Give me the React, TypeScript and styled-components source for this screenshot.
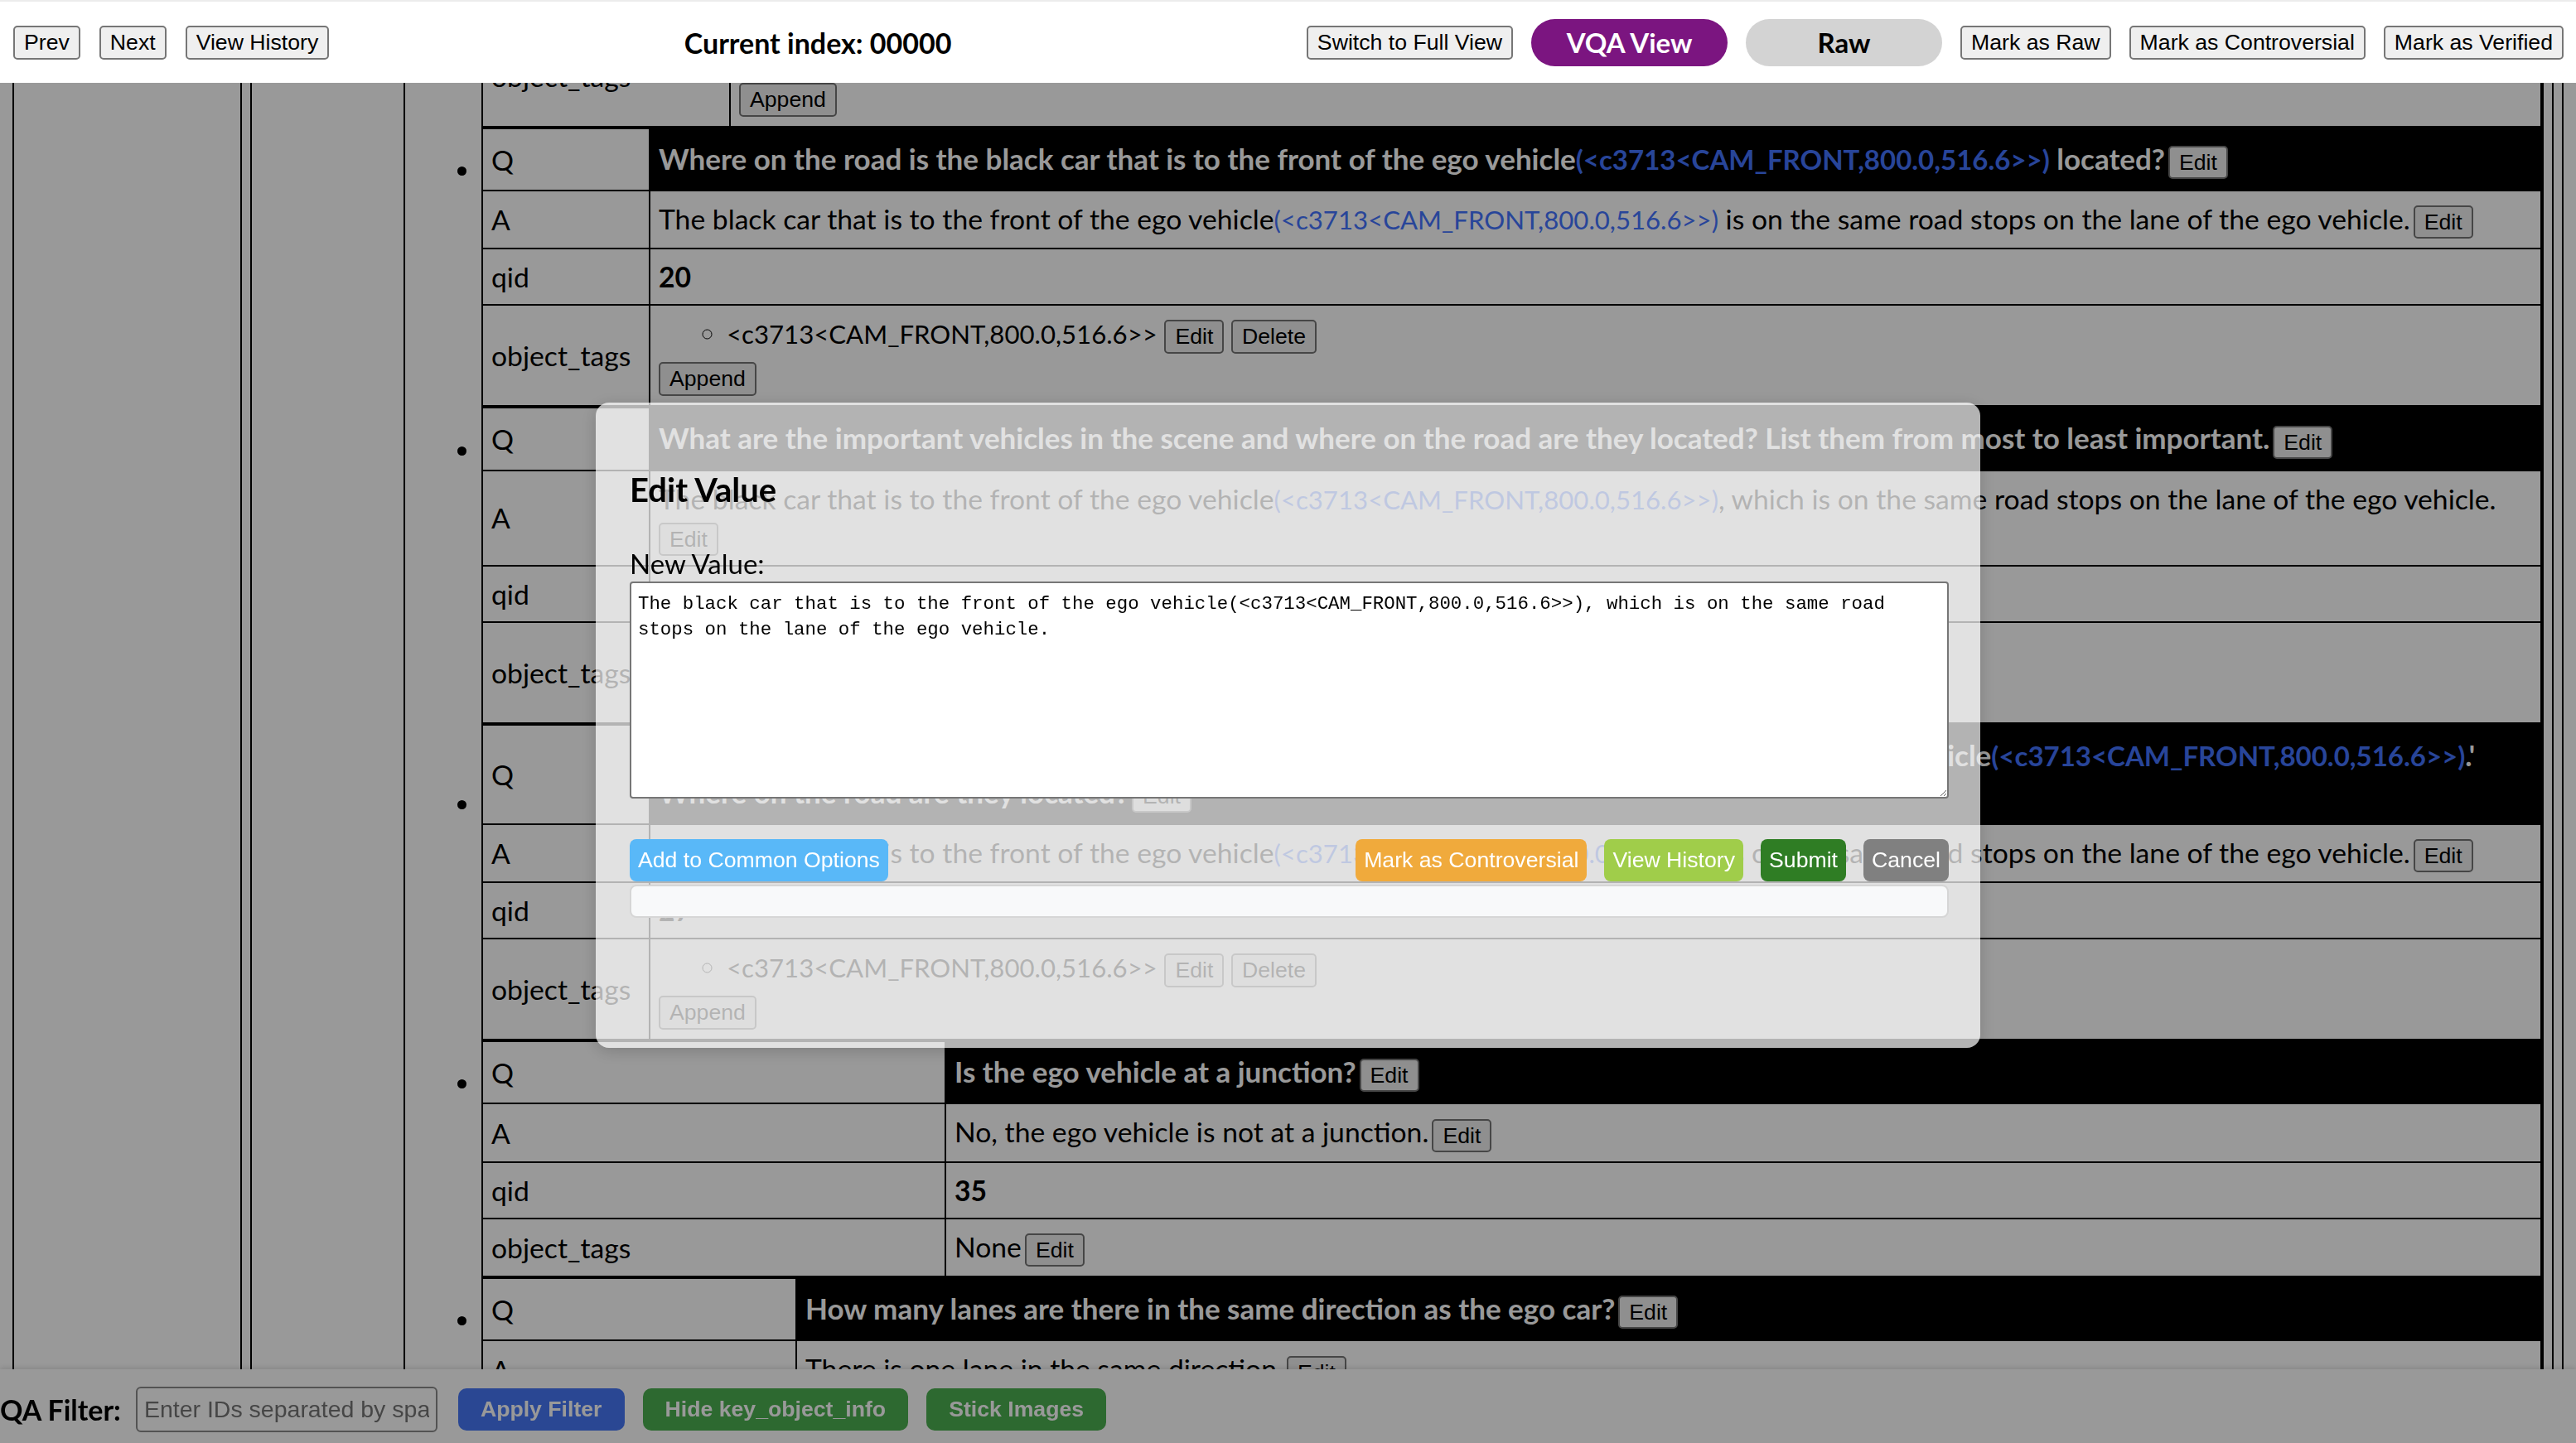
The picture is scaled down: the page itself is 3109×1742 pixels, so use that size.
import styled, { createGlobalStyle } from "styled-components"
import { Fragment } from "react"

const GlobalStyle = createGlobalStyle`
  *, *::before, *::after { box-sizing: border-box; }
  html, body { margin: 0; padding: 0; background: #fff; overflow: hidden; }
  body {
    font-family: Lato, "Noto Sans", sans-serif;
    font-size: 33.7px;
    color: #000;
  }
`

const TAG = "(<c3713<CAM_FRONT,800.0,516.6>>)"
const TAG_TEXT = "<c3713<CAM_FRONT,800.0,516.6>>"

type Entry = {
  label: number
  bare?: boolean
  q?: string[]
  a?: string
  aBreak?: boolean
  qid?: string
  tags: string[] | null
}

const entries: Entry[] = [
  { label: 299, bare: true, tags: [TAG_TEXT] },
  {
    label: 202,
    q: [`Where on the road is the black car that is to the front of the ego vehicle${TAG} located?`],
    a: `The black car that is to the front of the ego vehicle${TAG} is on the same road stops on the lane of the ego vehicle.`,
    qid: "20",
    tags: [TAG_TEXT],
  },
  {
    label: 202,
    q: ["What are the important vehicles in the scene and where on the road are they located? List them from most to least important."],
    a: `The black car that is to the front of the ego vehicle${TAG}, which is on the same road stops on the lane of the ego vehicle.`,
    aBreak: true,
    qid: "24",
    tags: [TAG_TEXT],
  },
  {
    label: 202,
    q: [
      `What are the important objects in the scene? Identify the black car that is to the front of the ego vehicle${TAG}.'`,
      "Where on the road are they located?",
    ],
    a: `The black car that is to the front of the ego vehicle${TAG} is on the same road stops on the lane of the ego vehicle.`,
    qid: "27",
    tags: [TAG_TEXT],
  },
  {
    label: 559,
    q: ["Is the ego vehicle at a junction?"],
    a: "No, the ego vehicle is not at a junction.",
    qid: "35",
    tags: null,
  },
  {
    label: 379,
    q: ["How many lanes are there in the same direction as the ego car?"],
    a: "There is one lane in the same direction.",
    qid: "36",
    tags: null,
  },
]

/* ---------- top bar ---------- */

const TopBar = styled.header`
  position: fixed;
  top: 0;
  left: 0;
  right: 0;
  z-index: 30;
  height: 100px;
  display: flex;
  align-items: center;
  justify-content: space-between;
  padding: 0 15px 0 16px;
  background: #fff;
  border-top: 2px solid #ececec;
`

const ButtonGroup = styled.div<{ $gap: number }>`
  display: flex;
  align-items: center;
  gap: ${p => p.$gap}px;
`

const PlainButton = styled.button`
  font-family: "Liberation Sans", Arial, sans-serif;
  font-size: 26.67px;
  line-height: 31px;
  padding: 3px 11px;
  color: #000;
  background: #efefef;
  border: 2px solid #767676;
  border-radius: 5px;
  cursor: pointer;
`

const IndexLabel = styled.div`
  font-weight: 700;
  font-size: 34px;
`

const ViewPill = styled.button<{ $active?: boolean }>`
  width: 237px;
  height: 57px;
  border: none;
  border-radius: 29px;
  font-family: Lato, sans-serif;
  font-weight: 700;
  font-size: 33px;
  background: ${p => (p.$active ? "#7b1580" : "#d3d3d3")};
  color: ${p => (p.$active ? "#fff" : "#000")};
`

/* ---------- page frame ---------- */

const Frame = styled.div`
  margin-left: 15px;
  width: 3079px;
  min-height: 1742px;
  display: flex;
  border-left: 2px solid #000;
  border-right: 2px solid #000;
`

const SideCell = styled.div`
  flex: none;
  width: 275px;
  border-right: 2px solid #000;
`

const InnerFrame = styled.div`
  flex: 1;
  display: flex;
  margin: 0 10px;
  border-left: 2px solid #000;
  border-right: 2px solid #000;
`

const MidCell = styled.div`
  flex: none;
  width: 185px;
  border-right: 2px solid #000;
`

const ListCell = styled.div`
  flex: 1;
  min-width: 0;
  margin-right: 10px;
  border-right: 2px solid #000;
`

const QaList = styled.ul`
  margin: 30px 0 0;
  padding: 0 0 0 92px;
  list-style: disc;
`

const QaItem = styled.li<{ $bare?: boolean }>`
  list-style: ${p => (p.$bare ? "none" : "disc")};
`

const QaTable = styled.table`
  width: 100%;
  border-collapse: collapse;
`

const TagText = styled.span<{ $plain?: boolean }>`
  font-size: 0.925em;
  color: ${p => (p.$plain ? "inherit" : "#4474ff")};
`

const Cell = styled.td`
  border: 2px solid #000;
  padding: 11px 10px;
  line-height: 44px;
  vertical-align: middle;
`

const LabelCell = styled(Cell)<{ $w: number }>`
  width: ${p => p.$w}px;
`

const QuestionCell = styled(Cell)`
  padding-top: 13px;
  padding-bottom: 13px;
  background: #000;
  color: #fff;
  font-weight: 700;
  font-size: 35px;
  ${TagText} { font-size: 0.943em; }
`

const InlineButton = styled(PlainButton)<{ $flush?: boolean }>`
  margin-left: ${p => (p.$flush ? 0 : 4)}px;
  vertical-align: middle;
  line-height: 30px;
  font-weight: 400;
`

const TagList = styled.ul`
  margin: 0 0 10px;
  padding-left: 82px;
  list-style: circle;
`

const AppendButton = styled(PlainButton)`
  display: block;
`

/* ---------- bottom filter bar ---------- */

const FilterBar = styled.footer`
  position: fixed;
  left: 0;
  right: 0;
  bottom: 0;
  z-index: 10;
  height: 89px;
  display: flex;
  align-items: center;
  gap: 22px;
  padding-top: 8px;
  background: #fff;
  box-shadow: 0 -2px 6px rgba(0, 0, 0, 0.12);
`

const FilterLabel = styled.span`
  font-weight: 700;
  font-size: 34px;
  margin-right: -4px;
`

const FilterInput = styled.input`
  width: 364px;
  height: 55px;
  padding: 0 8px;
  margin-right: 3px;
  font-family: "Liberation Sans", Arial, sans-serif;
  font-size: 28.5px;
  border: 2px solid #8a8a8a;
  border-radius: 6px;
  background: #fff;
  &::placeholder { color: #757575; }
`

const FilterButton = styled.button<{ $tone: string }>`
  height: 51px;
  padding: 0 27px;
  border: none;
  border-radius: 10px;
  font-family: "Liberation Sans", Arial, sans-serif;
  font-weight: 700;
  font-size: 26.67px;
  color: #fff;
  background: ${p => p.$tone};
`

/* ---------- edit dialog ---------- */

const Backdrop = styled.div`
  position: fixed;
  inset: 0;
  z-index: 20;
  display: flex;
  align-items: center;
  justify-content: center;
  padding-top: 8px;
  background: rgba(0, 0, 0, 0.4);
`

const Dialog = styled.div`
  width: 1671px;
  height: 779px;
  padding: 80px 38px 0 41px;
  background: rgba(255, 255, 255, 0.7);
  border-radius: 16px;
  box-shadow: 0 4px 20px rgba(0, 0, 0, 0.18);
`

const DialogTitle = styled.h2`
  margin: 0;
  font-size: 40px;
  line-height: 50px;
  font-weight: 700;
`

const FieldLabel = styled.label`
  display: block;
  margin-top: 42px;
  font-size: 33px;
  line-height: 44px;
`

const ValueArea = styled.textarea`
  display: block;
  width: 100%;
  height: 262px;
  padding: 10px 8px;
  font-family: "Liberation Mono", monospace;
  font-size: 22.4px;
  line-height: 31px;
  color: #000;
  background: #fff;
  border: 2px solid #767676;
  border-radius: 4px;
  resize: vertical;
`

const ActionRow = styled.div`
  margin-top: 49px;
  display: flex;
  justify-content: space-between;
`

const ActionButton = styled.button<{ $tone: string }>`
  height: 51px;
  padding: 0 10px;
  border: none;
  border-radius: 8px;
  font-family: "Liberation Sans", Arial, sans-serif;
  font-size: 26.67px;
  color: #fff;
  background: ${p => p.$tone};
`

const BlankField = styled.div`
  margin-top: 4px;
  height: 40px;
  border: 2px solid #d6d6d6;
  border-radius: 8px;
  background: #f8f9fa;
`

function Rich({ text }: { text: string }) {
  const parts = text.split(/(\(<c\d+<[^)]*>>\))/)
  return (
    <>
      {parts.map((p, i) => (i % 2 === 1 ? <TagText key={i}>{p}</TagText> : <Fragment key={i}>{p}</Fragment>))}
    </>
  )
}

function QaBlock({ entry }: { entry: Entry }) {
  const w = entry.label
  return (
    <QaItem $bare={entry.bare}>
      <QaTable>
        <tbody>
          {entry.q && (
            <tr>
              <LabelCell $w={w}>Q</LabelCell>
              <QuestionCell>
                {entry.q.map((line, i) => (
                  <Fragment key={i}>
                    {i > 0 && <br />}
                    <Rich text={line} />
                  </Fragment>
                ))}
                <InlineButton>Edit</InlineButton>
              </QuestionCell>
            </tr>
          )}
          {entry.a && (
            <tr>
              <LabelCell $w={w}>A</LabelCell>
              <Cell>
                <Rich text={entry.a} />
                {entry.aBreak && <br />}
                <InlineButton $flush={entry.aBreak}>Edit</InlineButton>
              </Cell>
            </tr>
          )}
          {entry.qid && (
            <tr>
              <LabelCell $w={w}>qid</LabelCell>
              <Cell>
                <b>{entry.qid}</b>
              </Cell>
            </tr>
          )}
          <tr>
            <LabelCell $w={w}>object_tags</LabelCell>
            <Cell>
              {entry.tags ? (
                <>
                  <TagList>
                    {entry.tags.map(t => (
                      <li key={t}>
                        <TagText $plain>{t}</TagText> <PlainButton>Edit</PlainButton> <PlainButton>Delete</PlainButton>
                      </li>
                    ))}
                  </TagList>
                  <AppendButton>Append</AppendButton>
                </>
              ) : (
                <>
                  None<InlineButton>Edit</InlineButton>
                </>
              )}
            </Cell>
          </tr>
        </tbody>
      </QaTable>
    </QaItem>
  )
}

export default function App() {
  return (
    <>
      <GlobalStyle />
      <TopBar>
        <ButtonGroup $gap={23}>
          <PlainButton>Prev</PlainButton>
          <PlainButton>Next</PlainButton>
          <PlainButton>View History</PlainButton>
        </ButtonGroup>
        <IndexLabel>Current index: 00000</IndexLabel>
        <ButtonGroup $gap={22}>
          <PlainButton>Switch to Full View</PlainButton>
          <ViewPill $active>VQA View</ViewPill>
          <ViewPill>Raw</ViewPill>
          <PlainButton>Mark as Raw</PlainButton>
          <PlainButton>Mark as Controversial</PlainButton>
          <PlainButton>Mark as Verified</PlainButton>
        </ButtonGroup>
      </TopBar>

      <Frame>
        <SideCell />
        <InnerFrame>
          <MidCell />
          <ListCell>
            <QaList>
              {entries.map((e, i) => (
                <QaBlock key={i} entry={e} />
              ))}
            </QaList>
          </ListCell>
        </InnerFrame>
      </Frame>

      <FilterBar>
        <FilterLabel>QA Filter:</FilterLabel>
        <FilterInput placeholder="Enter IDs separated by spaces" />
        <FilterButton $tone="#4677f5">Apply Filter</FilterButton>
        <FilterButton $tone="#4caf50">Hide key_object_info</FilterButton>
        <FilterButton $tone="#4caf50">Stick Images</FilterButton>
      </FilterBar>

      <Backdrop>
        <Dialog>
          <DialogTitle>Edit Value</DialogTitle>
          <FieldLabel>New Value:</FieldLabel>
          <ValueArea
            defaultValue={`The black car that is to the front of the ego vehicle${TAG}, which is on the same road stops on the lane of the ego vehicle.`}
          />
          <ActionRow>
            <ActionButton $tone="#59b8f8">Add to Common Options</ActionButton>
            <ButtonGroup $gap={21}>
              <ActionButton $tone="#f0aa3c">Mark as Controversial</ActionButton>
              <ActionButton $tone="#a0cd4a">View History</ActionButton>
              <ActionButton $tone="#2f7d24">Submit</ActionButton>
              <ActionButton $tone="#808080">Cancel</ActionButton>
            </ButtonGroup>
          </ActionRow>
          <BlankField />
        </Dialog>
      </Backdrop>
    </>
  )
}
